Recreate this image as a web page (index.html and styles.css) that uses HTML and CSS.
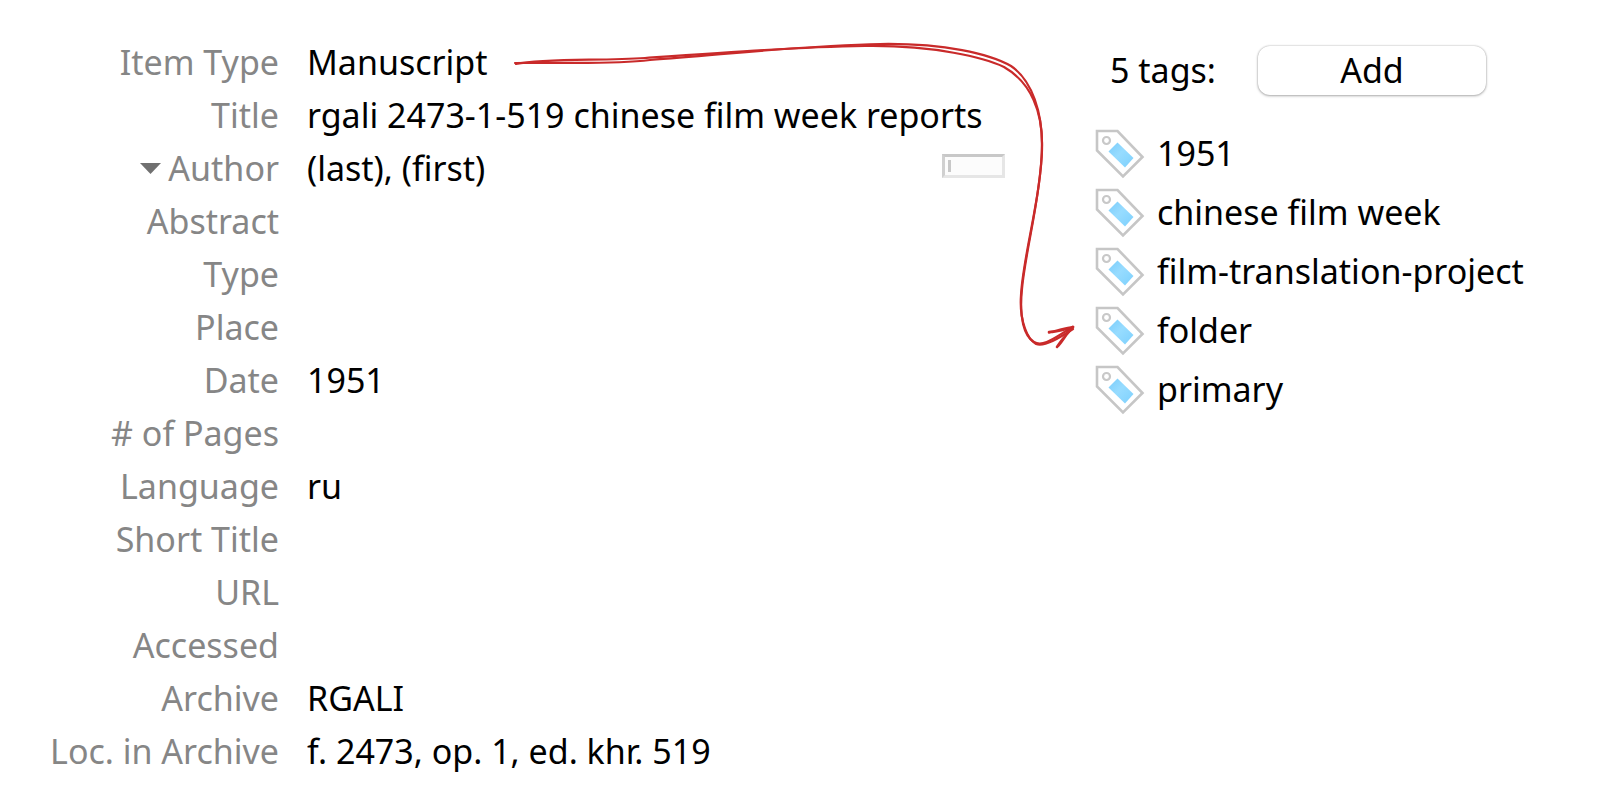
FILE: index.html
```html
<!DOCTYPE html>
<html lang="en">
<head>
<meta charset="utf-8">
<title>Item details</title>
<link rel="stylesheet" href="styles.css">
</head>
<body>
<svg class="defs" aria-hidden="true">
  <defs>
    <linearGradient id="tag-fill" x1="0" y1="0" x2="1" y2="1">
      <stop offset="0" stop-color="#7accfb"/>
      <stop offset=".45" stop-color="#97dcff"/>
      <stop offset="1" stop-color="#7dd0fd"/>
    </linearGradient>
    <symbol id="tag" viewBox="0 0 50 50">
      <path d="M2 2H22.500L47.500 28L28 47.500L2 21.500Z" fill="#fff" stroke="#c6c6c6" stroke-width="2.600"/>
      <circle cx="11.500" cy="11.500" r="3.500" fill="#fff" stroke="#c8c8c8" stroke-width="2.200"/>
      <path d="M22.500 13.500L38.500 29L30 38.500L13.500 22.500Z" fill="url(#tag-fill)"/>
    </symbol>
  </defs>
</svg>
<main class="page">
  <dl class="fields">
    <div class="row"><dt>Item Type</dt><dd>Manuscript</dd></div>
    <div class="row"><dt>Title</dt><dd>rgali 2473-1-519 chinese film week reports</dd></div>
    <div class="row">
      <dt><button class="toggle" type="button" aria-label="Author options"><svg width="21" height="11" viewBox="0 0 21 11"><path d="M0 0H21L10.500 11Z" fill="#707070"/></svg></button>Author</dt>
      <dd>(last), (first)<button class="mode" type="button" aria-label="Switch to single field"><span class="caret"></span></button></dd>
    </div>
    <div class="row"><dt>Abstract</dt><dd></dd></div>
    <div class="row"><dt>Type</dt><dd></dd></div>
    <div class="row"><dt>Place</dt><dd></dd></div>
    <div class="row"><dt>Date</dt><dd>1951</dd></div>
    <div class="row"><dt># of Pages</dt><dd></dd></div>
    <div class="row"><dt>Language</dt><dd>ru</dd></div>
    <div class="row"><dt>Short Title</dt><dd></dd></div>
    <div class="row"><dt>URL</dt><dd></dd></div>
    <div class="row"><dt>Accessed</dt><dd></dd></div>
    <div class="row"><dt>Archive</dt><dd>RGALI</dd></div>
    <div class="row"><dt>Loc. in Archive</dt><dd>f. 2473, op. 1, ed. khr. 519</dd></div>
  </dl>
  <section class="tags">
    <div class="tags-head"><span>5 tags:</span><button class="add" type="button">Add</button></div>
    <ul class="tag-list">
      <li><svg class="tag-icon"><use href="#tag"/></svg><span>1951</span></li>
      <li><svg class="tag-icon"><use href="#tag"/></svg><span>chinese film week</span></li>
      <li><svg class="tag-icon"><use href="#tag"/></svg><span>film-translation-project</span></li>
      <li><svg class="tag-icon"><use href="#tag"/></svg><span>folder</span></li>
      <li><svg class="tag-icon"><use href="#tag"/></svg><span>primary</span></li>
    </ul>
  </section>
  <svg class="arrow" width="570" height="320" viewBox="510 35 570 320" aria-hidden="true">
    <g fill="none" stroke="#c92a2a" stroke-width="2.200" stroke-linecap="round" stroke-linejoin="round">
      <path d="M515 63C560 62 610 65 650 60C730 54 810 45 880 44C945 43 990 54 1011 66C1032 80 1043 113 1042 150C1041 195 1025 253 1022 289C1019 318 1024 336 1034 342C1044 348 1058 335 1073 327"/>
      <path d="M516 64C545 58 600 61 645 58C730 52 800 47 865 46C935 45 985 58 1004 67C1032 83 1042 113 1042 143C1042 195 1023 255 1021 295C1019 321 1028 340 1036 344C1045 347 1059 338 1073 329"/>
      <path stroke-width="2.600" d="M1049 332C1057 332 1065 329 1073 327C1066 328 1057 331 1049 332.500"/>
      <path stroke-width="2.600" d="M1057 347C1062 339 1068 333 1073 327C1067 332 1063 341 1058 346"/>
    </g>
  </svg>
</main>
</body>
</html>
```
FILE: styles.css
```css
body {
  margin: 0;
  background: #fff;
  color: #000;
  font-family: "Noto Sans", "Open Sans", sans-serif;
  font-size: 34px;
  line-height: 53px;
}
button {
  font: inherit;
  color: inherit;
  padding: 0;
}
.defs {
  position: absolute;
  width: 0;
  height: 0;
}
.page {
  position: relative;
  display: grid;
  grid-template-columns: minmax(1040px, 68%) 1fr;
  padding-top: 36px;
}
.fields {
  margin: 0;
}
.row {
  display: grid;
  grid-template-columns: 279px 1fr;
  column-gap: 28px;
  min-height: 53px;
}
.row dt {
  display: flex;
  justify-content: flex-end;
  align-items: center;
  gap: 7px;
  color: #868686;
  white-space: nowrap;
}
.row dd {
  display: flex;
  justify-content: space-between;
  align-items: center;
  margin: 0;
  padding-right: 83px;
  white-space: nowrap;
}
.toggle {
  display: flex;
  border: 0;
  background: none;
}
.mode {
  display: flex;
  box-sizing: border-box;
  width: 63px;
  height: 24px;
  margin-bottom: 5px;
  padding: 3px;
  border: 3px solid #e6e6e6;
  border-top-color: #c8c8c8;
  border-left-color: #d0d0d0;
  background: #fcfcfc;
}
.caret {
  width: 3px;
  height: 12px;
  background: #c8c8c8;
}
.tags {
  padding: 8px 16px 0 7px;
}
.tags-head {
  display: flex;
  align-items: center;
  gap: 42px;
  padding-left: 15px;
}
.add {
  width: 228px;
  height: 49px;
  line-height: 49px;
  border: 0;
  border-radius: 12px;
  background: #fff;
  box-shadow: 0 0 2px rgba(0, 0, 0, .28), 0 1px 3px rgba(0, 0, 0, .28);
}
.tag-list {
  margin: 0;
  padding: 27px 0 0;
  list-style: none;
}
.tag-list li {
  display: flex;
  align-items: center;
  gap: 12px;
  height: 59px;
  white-space: nowrap;
}
.tag-icon {
  width: 50px;
  height: 50px;
}
.arrow {
  position: absolute;
  left: 510px;
  top: 35px;
  pointer-events: none;
}
```
